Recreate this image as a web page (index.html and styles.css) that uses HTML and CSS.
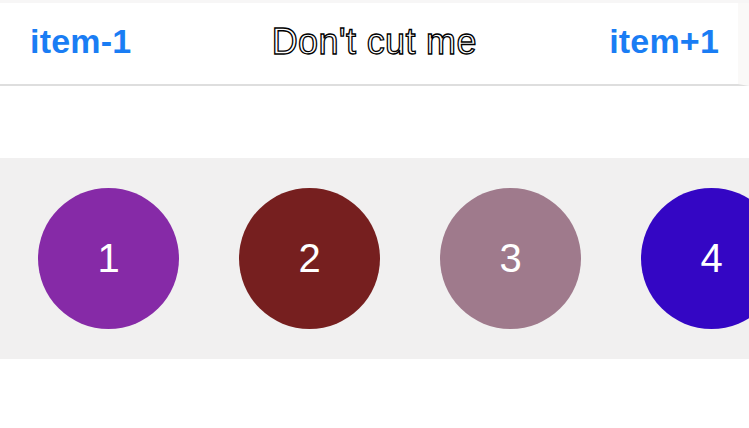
FILE: index.html
```html
<!DOCTYPE html>
<html>
<head>
<meta charset="utf-8">
<link rel="stylesheet" href="styles.css">
</head>
<body>
<div class="page">
  <header class="navbar">
    <span class="nav-btn">item-1</span>
    <span class="nav-title">Don't cut me</span>
    <span class="nav-btn">item+1</span>
  </header>
  <div class="spacer"></div>
  <section class="strip">
    <div class="circle c1">1</div>
    <div class="circle c2">2</div>
    <div class="circle c3">3</div>
    <div class="circle c4">4</div>
  </section>
</div>
</body>
</html>
```
FILE: styles.css
```css
html, body {
  margin: 0;
  padding: 0;
  background: #ffffff;
  overflow: hidden;
}
.page {
  width: 749px;
  height: 428px;
  display: flex;
  flex-direction: column;
  font-family: "Liberation Sans", Arial, sans-serif;
  border-top: 3px solid #f7f6f6;
  box-sizing: border-box;
  overflow: hidden;
}
.navbar {
  height: 83px;
  flex: none;
  display: flex;
  align-items: center;
  justify-content: space-between;
  padding: 0 19px 0 30px;
  border-bottom: 2px solid #dedede;
  border-right: 11px solid #faf9f8;
  box-sizing: border-box;
  background: #fff;
}
.nav-btn {
  color: #1a7df4;
  font-size: 34px;
  font-weight: bold;
  letter-spacing: 0.2px;
  margin-top: -4px;
}
.nav-title {
  color: #ffffff;
  -webkit-text-stroke: 1.3px #000;
  font-size: 36px;
  letter-spacing: 0.35px;
  margin-top: -4px;
  margin-left: 8px;
}
.spacer {
  height: 72px;
  flex: none;
}
.strip {
  height: 201px;
  flex: none;
  background: #f1f0f0;
  display: flex;
  align-items: center;
  gap: 60px;
  padding-left: 38px;
  box-sizing: border-box;
}
.circle {
  width: 141px;
  height: 141px;
  flex: none;
  border-radius: 50%;
  display: flex;
  align-items: center;
  justify-content: center;
  color: #ffffff;
  font-size: 40px;
}
.c1 { background: #862aa7; }
.c2 { background: #761f1f; }
.c3 { background: #9f7a8c; }
.c4 { background: #3406c4; }
```
